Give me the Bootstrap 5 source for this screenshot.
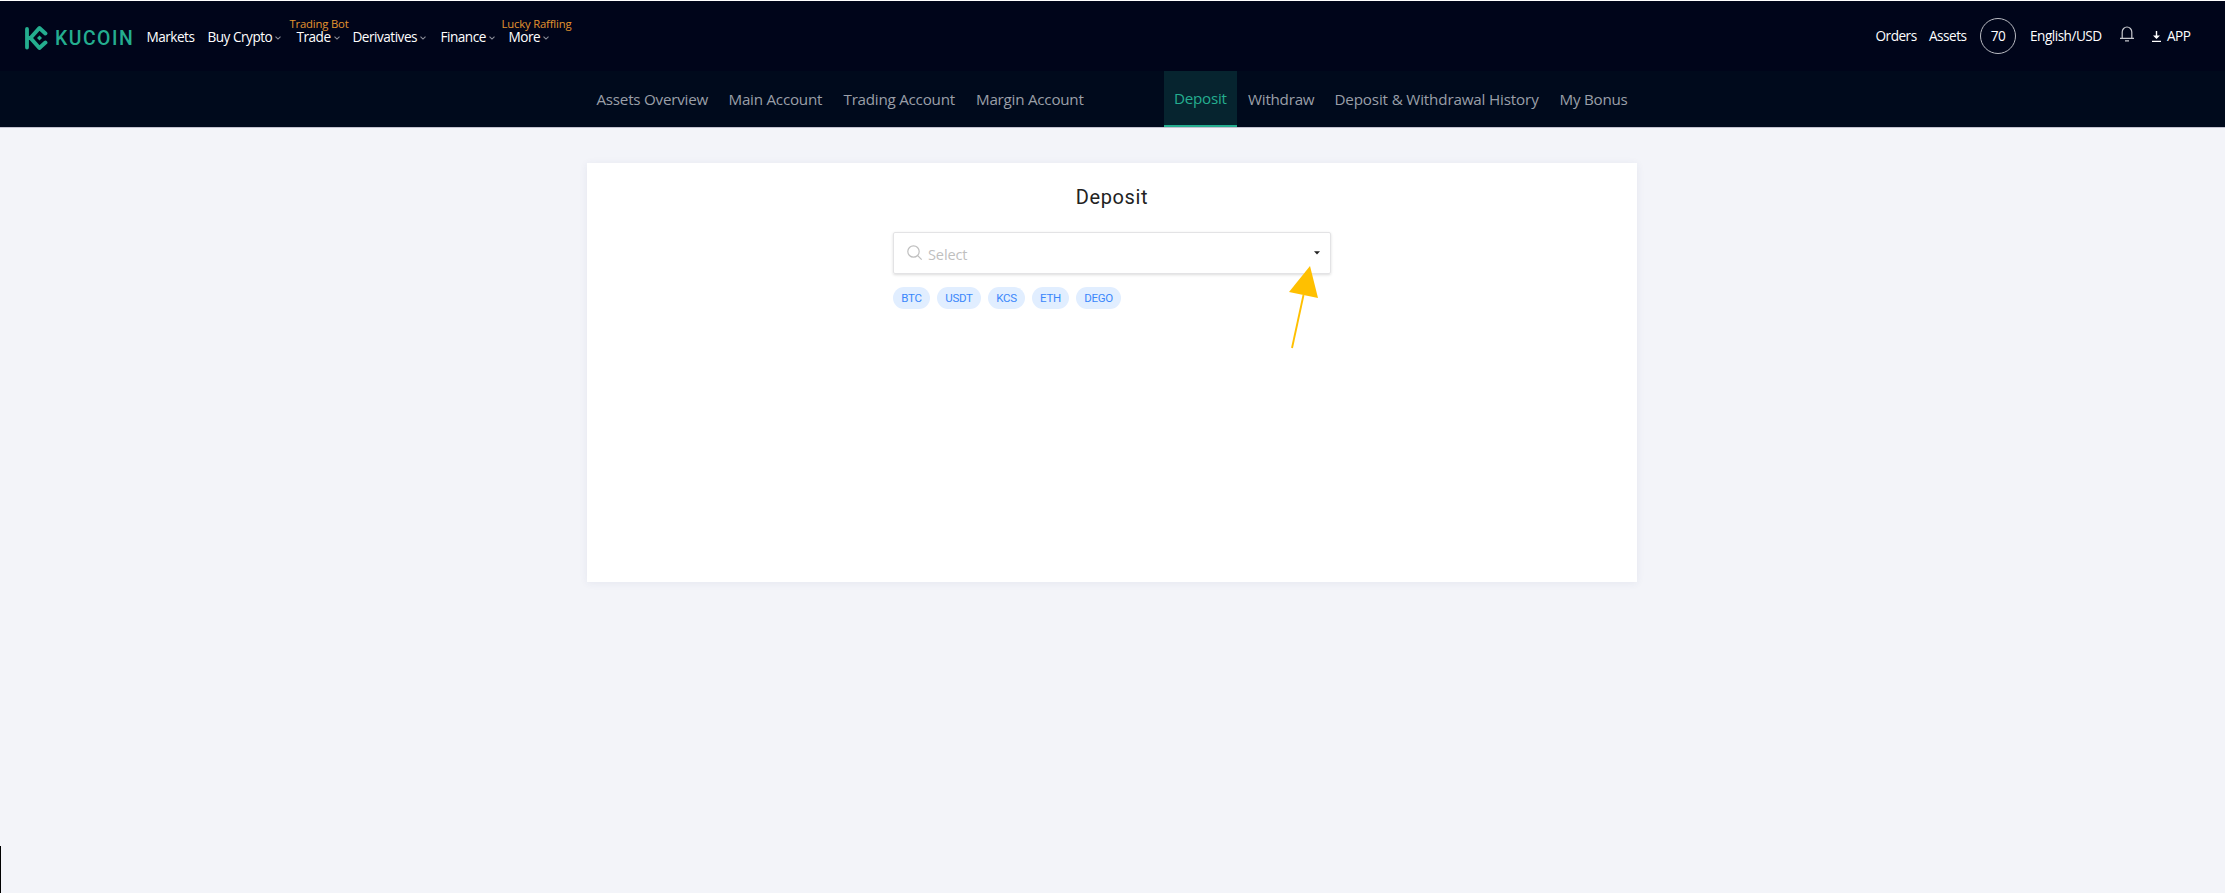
<!DOCTYPE html>
<html lang="en">
<head>
<meta charset="utf-8">
<title>Deposit | KuCoin</title>
<meta name="viewport" content="width=device-width, initial-scale=1">
<link href="https://cdn.jsdelivr.net/npm/bootstrap@5.3.0/dist/css/bootstrap.min.css" rel="stylesheet">
<style>
body{font-family:"Open Sans","Noto Sans",sans-serif;background:#fff;height:893px;overflow:hidden;padding:1px 2px 0 0}
.page{background:#f3f4f9;height:892px}
.topbar{background:#00051a;height:70px;font-size:13.6px;letter-spacing:-.5px;color:#fff;line-height:20px;padding-left:25px}
.topbar a,.subbar a{color:inherit;text-decoration:none;white-space:nowrap}
.brand{width:121.500px;height:50px;margin-top:12px}
.brand-name{font:500 19.4px/22px Roboto,sans-serif;color:#24ae8f;letter-spacing:1.5px;margin-left:7px;padding-top:2px}
.menu{grid-template-columns:61px 89px 56px 88px 68px 60px;margin-top:26px}
.menu .tag{left:-7px;top:-13px;font-size:11.3px;letter-spacing:-.18px;color:#e3942f}
.menu svg{margin-left:3px}
.tools{display:grid;grid-template-columns:53.5px 51px 50px 90px 32px 15px 58px;height:70px}
.level{width:36px;height:36px;border:1px solid #b9bbc2}
.subbar{background:#000a1c;height:56px;font-size:15.2px;letter-spacing:-.24px;color:#9a9fa8;line-height:22px}
.subbar .row-l{grid-template-columns:132px 115px 132.5px 188px;margin-left:596.5px}
.subbar .row-r{grid-template-columns:84px 86.5px 225px 80px}
.subbar .tab-item{padding-top:17px}
.subbar .current{width:73px;height:56px;background:#06242f;color:#24ae8f;border-bottom:2px solid #24ae8f;padding:16px 0 0 10px}
.subbar .long{letter-spacing:-.16px}
.rule{height:1px;background:#c3c2d0}
.panel{width:1050px;height:419px;margin:35px 0 0 587px;background:#fff;box-shadow:0 1px 8px rgba(40,60,110,.07)}
.panel h1{font:400 20px/28px Roboto,sans-serif;letter-spacing:.6px;color:#222;padding-top:20px;margin:0}
.picker{width:438px;height:42px;margin:21px 0 0 306px;border:1px solid #e3e3e5;border-radius:2px;box-shadow:0 1px 3px rgba(0,0,0,.14);padding:0 10px 0 13px;font-size:14.6px;color:#bfbfbf;letter-spacing:-.15px}
.picker .hint{margin-left:5px;padding-top:2px}
.coins{margin:13px 0 0 306px;gap:7px}
.coins span{height:22px;background:#e1eeff;color:#3a87fb;font:400 11.5px/22px Roboto,sans-serif;letter-spacing:-.3px;text-align:center;width:37px;border-radius:11px}
.coins .wide{width:44px}
.coins .widest{width:45px}
.pointer{left:1286px;top:264px}
.edge{left:0;top:846px;width:1px;height:47px;background:#000}
</style>
</head>
<body>
<svg class="d-none"><symbol id="chev" viewBox="0 0 6 4"><path d="M.5.7 3 3.1 5.5.7" fill="none" stroke="#8b8e9a" stroke-width="1.1"/></symbol></svg>
<div class="page">
  <header class="topbar d-flex">
    <a href="#" class="brand d-flex align-items-center">
      <svg width="23" height="26" viewBox="0 0 23 26" fill="none" stroke="#24ae8f"><path d="M2 4v18.500M2 13h4" stroke-width="3.800" stroke-linecap="round"/><path d="M20.400 8.400 14.400 3 5.500 13l8.900 10 6-5.400" stroke-width="4" stroke-linecap="round" stroke-linejoin="round"/><path d="m14.500 10.500 2.500 2.500-2.500 2.500L12 13z" fill="#24ae8f" stroke="none"/></svg>
      <span class="brand-name">KUCOIN</span>
    </a>
    <nav class="menu d-grid align-self-start">
      <a href="#">Markets</a>
      <a href="#">Buy Crypto<svg width="6" height="4"><use href="#chev"/></svg></a>
      <a href="#" class="position-relative">Trade<svg width="6" height="4"><use href="#chev"/></svg><span class="tag position-absolute">Trading Bot</span></a>
      <a href="#">Derivatives<svg width="6" height="4"><use href="#chev"/></svg></a>
      <a href="#">Finance<svg width="6" height="4"><use href="#chev"/></svg></a>
      <a href="#" class="position-relative">More<svg width="6" height="4"><use href="#chev"/></svg><span class="tag position-absolute">Lucky Raffling</span></a>
    </nav>
    <div class="tools align-items-center ms-auto">
      <a href="#">Orders</a>
      <a href="#">Assets</a>
      <span class="level rounded-circle d-flex align-items-center justify-content-center">70</span>
      <a href="#">English/USD</a>
      <svg class="mb-1" width="14" height="16" viewBox="0 0 14 16" fill="none" stroke="#c6c8ce" stroke-width="1.200"><path d="M0 12.400h14M2.200 12.400V6a4.800 5 0 0 1 9.600 0v6.400M5 14.800h4"/></svg>
      <svg width="9" height="11" viewBox="0 0 9 11"><path d="M3.800 0h1.400v4.500H8L4.500 8 1 4.500h2.800zM0 9.800h9V11H0z" fill="#fff"/></svg>
      <a href="#">APP</a>
    </div>
  </header>
  <nav class="subbar d-flex">
    <div class="row-l d-grid">
      <a href="#" class="tab-item">Assets Overview</a>
      <a href="#" class="tab-item">Main Account</a>
      <a href="#" class="tab-item">Trading Account</a>
      <a href="#" class="tab-item">Margin Account</a>
    </div>
    <div class="row-r d-grid">
      <a href="#" class="current">Deposit</a>
      <a href="#" class="tab-item">Withdraw</a>
      <a href="#" class="tab-item long">Deposit &amp; Withdrawal History</a>
      <a href="#" class="tab-item">My Bonus</a>
    </div>
  </nav>
  <div class="rule"></div>
  <main class="panel">
    <h1 class="text-center">Deposit</h1>
    <div class="picker d-flex align-items-center">
      <svg width="16" height="16" viewBox="0 0 16 16" fill="none" stroke="#bfbfbf" stroke-width="1.200"><circle cx="6.500" cy="6.500" r="5.700"/><path d="m10.700 10.700 4 4"/></svg>
      <span class="hint flex-grow-1 lh-1">Select</span>
      <svg width="6" height="4" viewBox="0 0 6 4"><path d="M0 .3h6L3 3.600z" fill="#222"/></svg>
    </div>
    <div class="coins d-flex">
      <span>BTC</span><span class="wide">USDT</span><span>KCS</span><span>ETH</span><span class="widest">DEGO</span>
    </div>
  </main>
</div>
<svg class="pointer position-absolute" width="34" height="86" viewBox="0 0 34 86"><path d="M17.500 31 6 84" stroke="#ffc000" stroke-width="1.900"/><path d="M24 2 32 34 3 28z" fill="#ffc000"/></svg>
<div class="edge position-absolute"></div>
<script src="https://cdn.jsdelivr.net/npm/bootstrap@5.3.0/dist/js/bootstrap.bundle.min.js"></script>
</body>
</html>
